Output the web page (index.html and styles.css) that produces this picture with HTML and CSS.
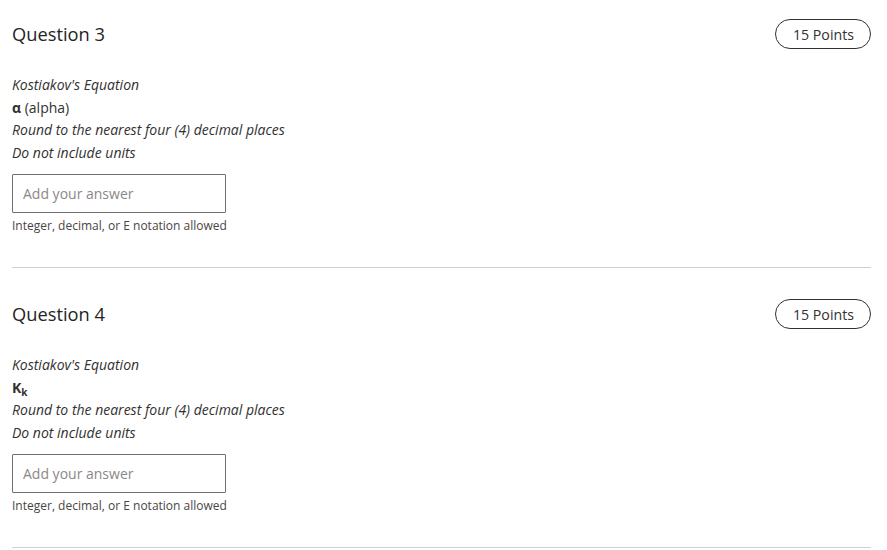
FILE: index.html
```html
<!DOCTYPE html>
<html>
<head>
<meta charset="utf-8">
<link rel="stylesheet" href="styles.css">
</head>
<body>
<div class="page">
  <section class="question">
    <div class="q-header">
      <h2 class="q-title">Question 3</h2>
      <span class="points">15 Points</span>
    </div>
    <div class="q-body">
      <p class="line em">Kostiakov's Equation</p>
      <p class="line"><b>α</b> (alpha)</p>
      <p class="line em">Round to the nearest four (4) decimal places</p>
      <p class="line em">Do not include units</p>
    </div>
    <div class="answer"><input class="answer-input" type="text" placeholder="Add your answer"></div>
    <p class="hint">Integer, decimal, or E notation allowed</p>
  </section>
  <section class="question">
    <div class="q-header">
      <h2 class="q-title">Question 4</h2>
      <span class="points">15 Points</span>
    </div>
    <div class="q-body">
      <p class="line em">Kostiakov's Equation</p>
      <p class="line"><b>K<sub>k</sub></b></p>
      <p class="line em">Round to the nearest four (4) decimal places</p>
      <p class="line em">Do not include units</p>
    </div>
    <div class="answer"><input class="answer-input" type="text" placeholder="Add your answer"></div>
    <p class="hint">Integer, decimal, or E notation allowed</p>
  </section>
</div>
</body>
</html>
```

FILE: styles.css
```css
* { box-sizing: border-box; }
html, body { margin: 0; padding: 0; background: #fff; }
body {
  font-family: "Open Sans", "Noto Sans", sans-serif;
  color: #323130;
}
.page {
  padding: 19px 16px 0 12px;
}
.question {
  border-bottom: 1px solid #d0d0d0;
  padding-bottom: 33px;
  margin-bottom: 31px;
}
.q-header {
  display: flex;
  justify-content: space-between;
  align-items: center;
  height: 30px;
}
.q-title {
  margin: 0;
  font-size: 18.3px;
  line-height: 28px;
  font-weight: 400;
  color: #252423;
}
.points {
  display: inline-flex;
  align-items: center;
  height: 30px;
  padding: 0 16px 0 17px;
  border: 1px solid #323130;
  border-radius: 15px;
  font-size: 14.2px;
  color: #323130;
}
.q-body {
  margin-top: 25px;
}
.line {
  margin: 0;
  font-size: 14px;
  line-height: 22.5px;
  color: #323130;
}
.line.em { font-style: italic; }
.line b { font-weight: 700; }
.line sub { font-size: 10px; vertical-align: -3px; line-height: 0; }
.answer { margin-top: 10px; }
.answer-input {
  display: block;
  width: 214px;
  height: 39px;
  border: 1px solid #707070;
  border-radius: 1px;
  padding: 0 10px;
  font-family: "Open Sans", "Noto Sans", sans-serif;
  font-size: 14px;
  color: #323130;
  outline: none;
}
.answer-input::placeholder { color: #8a8886; }
.hint {
  margin: 5px 0 0;
  font-size: 12px;
  line-height: 16px;
  color: #484644;
}
```
